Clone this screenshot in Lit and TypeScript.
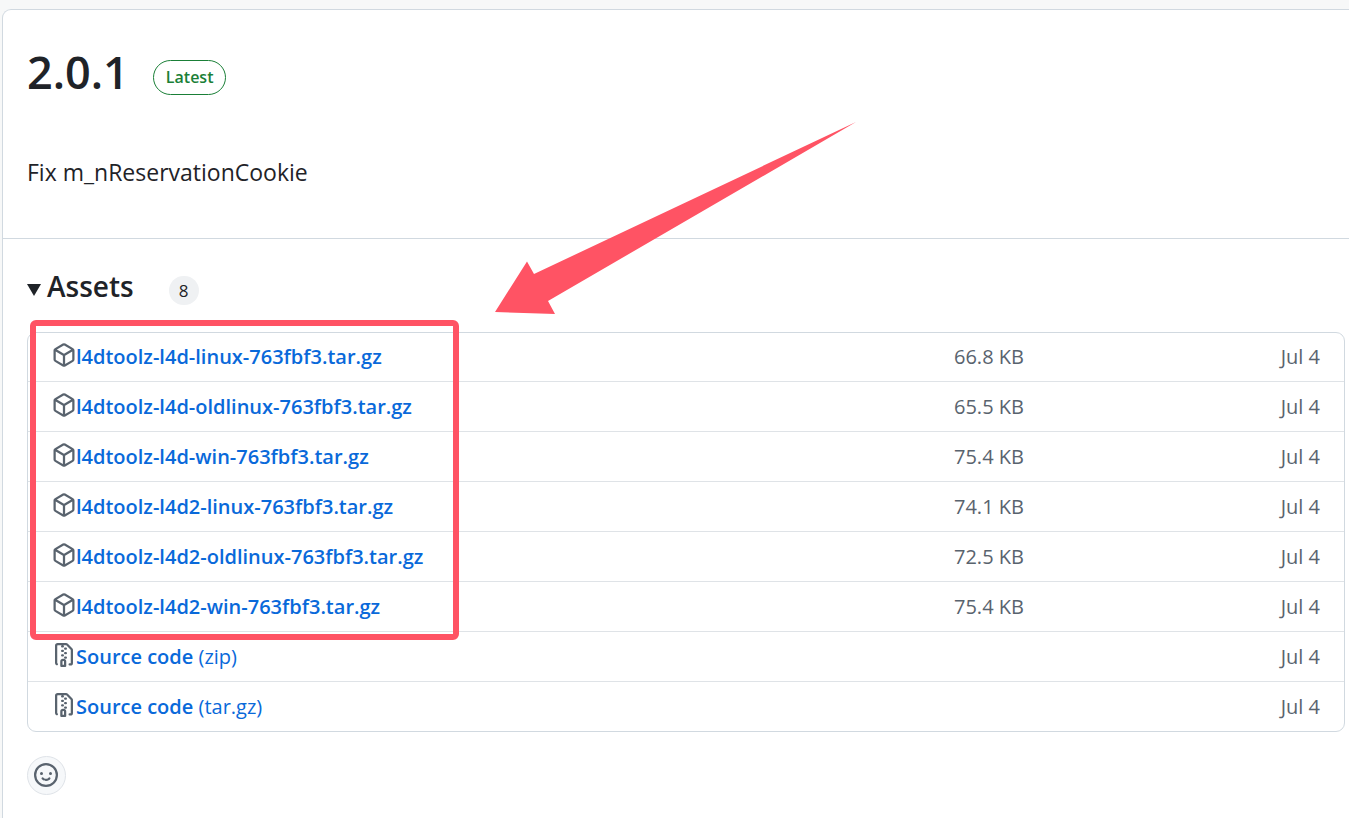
import { LitElement, html, css, svg, nothing } from "lit";
import { customElement, property } from "lit/decorators.js";

interface Asset {
  name: string;
  suffix?: string;
  size?: string;
  date: string;
  kind: "package" | "zip";
}

const ASSETS: Asset[] = [
  { name: "l4dtoolz-l4d-linux-763fbf3.tar.gz", size: "66.8 KB", date: "Jul 4", kind: "package" },
  { name: "l4dtoolz-l4d-oldlinux-763fbf3.tar.gz", size: "65.5 KB", date: "Jul 4", kind: "package" },
  { name: "l4dtoolz-l4d-win-763fbf3.tar.gz", size: "75.4 KB", date: "Jul 4", kind: "package" },
  { name: "l4dtoolz-l4d2-linux-763fbf3.tar.gz", size: "74.1 KB", date: "Jul 4", kind: "package" },
  { name: "l4dtoolz-l4d2-oldlinux-763fbf3.tar.gz", size: "72.5 KB", date: "Jul 4", kind: "package" },
  { name: "l4dtoolz-l4d2-win-763fbf3.tar.gz", size: "75.4 KB", date: "Jul 4", kind: "package" },
  { name: "Source code", suffix: "(zip)", date: "Jul 4", kind: "zip" },
  { name: "Source code", suffix: "(tar.gz)", date: "Jul 4", kind: "zip" },
];

const ICONS = {
  package: svg`<path d="m8.878.392 5.25 3.045c.54.314.872.89.872 1.514v6.098a1.75 1.75 0 0 1-.872 1.514l-5.25 3.045a1.75 1.75 0 0 1-1.756 0l-5.25-3.045A1.75 1.75 0 0 1 1 11.049V4.951c0-.624.332-1.201.872-1.514L7.122.392a1.75 1.75 0 0 1 1.756 0ZM7.875 1.69l-4.63 2.685L8 7.133l4.755-2.758-4.63-2.685a.248.248 0 0 0-.25 0ZM2.5 5.677v5.372c0 .09.047.171.125.216l4.625 2.683V8.432Zm6.25 8.271 4.625-2.683a.25.25 0 0 0 .125-.216V5.677L8.75 8.432Z"/>`,
  zip: svg`<path d="M3.5 1.75v11.5c0 .09.048.173.126.217a.75.75 0 0 1-.752 1.298A1.748 1.748 0 0 1 2 13.25V1.75C2 .784 2.784 0 3.75 0h5.586c.464 0 .909.185 1.237.513l2.914 2.914c.329.328.513.773.513 1.237v8.586A1.75 1.75 0 0 1 12.25 15h-.5a.75.75 0 0 1 0-1.5h.5a.25.25 0 0 0 .25-.25V4.664a.25.25 0 0 0-.073-.177L9.513 1.573a.25.25 0 0 0-.177-.073H7.25a.75.75 0 0 1 0 1.5h-.5a.75.75 0 0 1 0-1.5h-3a.25.25 0 0 0-.25.25Zm3.75 8.75h.5c.966 0 1.75.784 1.75 1.75v3a.75.75 0 0 1-.75.75h-2.5a.75.75 0 0 1-.75-.75v-3c0-.966.784-1.75 1.75-1.75ZM6 5.25a.75.75 0 0 1 .75-.75h.5a.75.75 0 0 1 0 1.5h-.5A.75.75 0 0 1 6 5.25Zm.75 2.25h.5a.75.75 0 0 1 0 1.5h-.5a.75.75 0 0 1 0-1.5ZM8 6.75A.75.75 0 0 1 8.75 6h.5a.75.75 0 0 1 0 1.5h-.5A.75.75 0 0 1 8 6.75ZM8.75 3h.5a.75.75 0 0 1 0 1.5h-.5a.75.75 0 0 1 0-1.5ZM8 9.75A.75.75 0 0 1 8.75 9h.5a.75.75 0 0 1 0 1.5h-.5A.75.75 0 0 1 8 9.75Zm-1 2.5v2.25h1v-2.25a.25.25 0 0 0-.25-.25h-.5a.25.25 0 0 0-.25.25Z"/>`,
  smiley: svg`<path d="M8 0a8 8 0 1 1 0 16A8 8 0 0 1 8 0ZM1.5 8a6.5 6.5 0 1 0 13 0 6.5 6.5 0 0 0-13 0Zm3.82 1.636a.75.75 0 0 1 1.038.175l.007.009c.103.118.22.222.35.31.264.178.683.37 1.285.37.602 0 1.02-.192 1.285-.371.13-.088.247-.192.35-.31l.007-.008a.75.75 0 0 1 1.222.87l-.022-.015c.02.013.021.015.021.015v.001l-.001.002-.002.003-.005.007-.014.019a2.066 2.066 0 0 1-.184.213c-.16.166-.338.316-.53.445-.63.418-1.37.638-2.127.629-.946 0-1.652-.308-2.126-.63a3.331 3.331 0 0 1-.715-.657l-.014-.02-.005-.006-.002-.003v-.002h-.001l.613-.432-.614.43a.75.75 0 0 1 .183-1.044ZM12 7a1 1 0 1 1-2 0 1 1 0 0 1 2 0ZM5 8a1 1 0 1 1 0-2 1 1 0 0 1 0 2Zm5.25 2.25.592.416a97.71 97.71 0 0 0-.592-.416Z"/>`,
};

@customElement("oct-icon")
export class OctIcon extends LitElement {
  static styles = css`
    :host {
      display: block;
      flex: none;
      width: 24px;
      height: 24px;
    }
    .glyph {
      display: block;
      width: 100%;
      height: 100%;
      fill: currentColor;
    }
  `;

  @property() name: keyof typeof ICONS = "package";

  render() {
    return html`<svg class="glyph" viewBox="0 0 16 16" aria-hidden="true">${ICONS[this.name]}</svg>`;
  }
}

@customElement("app-root")
export class AppRoot extends LitElement {
  static styles = css`
    :host {
      display: block;
      box-sizing: border-box;
      min-height: 100vh;
      padding: 9px 0 0 2px;
      overflow: hidden;
      background: #f7f8f8;
      color: #1f2328;
      font-family: "Segoe UI", "Open Sans", "Noto Sans", sans-serif;
      font-size: 20px;
      line-height: 30px;
    }
    .card {
      position: relative;
      box-sizing: border-box;
      min-height: calc(100vh - 9px);
      border: 1px solid #d1d9e0;
      border-width: 1px 0 0 1px;
      border-top-left-radius: 9px;
      background: #fff;
    }
    .release {
      padding: 32px 24px 48px;
      border-bottom: 1px solid #d1d9e0;
    }
    .heading {
      display: flex;
      align-items: center;
      gap: 24px;
      margin-bottom: 52px;
    }
    .title {
      margin: 0;
      font-size: 45px;
      line-height: 60px;
      font-weight: 600;
    }
    .latest {
      margin-top: 10px;
      padding: 0 12px;
      border: 1px solid #1a7f37;
      border-radius: 18px;
      color: #1a7f37;
      font-size: 16px;
      line-height: 33px;
      font-weight: 600;
    }
    .notes {
      margin: 0;
      font-size: 23px;
      line-height: 36px;
    }
    .assets {
      padding: 28px 4px 24px 24px;
    }
    .summary {
      display: flex;
      align-items: center;
      margin-bottom: 26px;
      list-style: none;
      cursor: pointer;
    }
    .summary::-webkit-details-marker {
      display: none;
    }
    .caret {
      width: 14px;
      height: 12px;
      margin: 6px 6px 0 0;
      fill: currentColor;
    }
    .assets-title {
      margin: 0;
      font-size: 28px;
      line-height: 39px;
      font-weight: 600;
    }
    .count {
      box-sizing: border-box;
      min-width: 30px;
      margin: 8px 0 0 35px;
      padding: 0 9px;
      border-radius: 15px;
      background: #eff1f3;
      font-size: 17px;
      line-height: 29px;
      font-weight: 500;
      text-align: center;
    }
    .panel {
      position: relative;
    }
    .list {
      margin: 0;
      padding: 0;
      border: 1px solid #d1d9e0;
      border-radius: 9px;
      list-style: none;
    }
    .row {
      display: grid;
      grid-template-columns: minmax(0, 1fr) 96px 270px;
      align-items: center;
      box-sizing: border-box;
      min-height: 50px;
      padding: 0 24px;
      border-top: 1px solid #dfe3e7;
    }
    .row:first-child {
      min-height: 48px;
      border-top: 0;
    }
    .file {
      display: flex;
      align-items: center;
      min-width: 0;
    }
    .file-icon {
      margin-top: -4px;
      color: #59636e;
    }
    .link {
      color: #0969da;
      text-decoration: none;
      white-space: nowrap;
    }
    .name {
      font-weight: 600;
    }
    .meta {
      color: #59636e;
      white-space: nowrap;
    }
    .date {
      text-align: right;
    }
    .react {
      display: grid;
      place-items: center;
      box-sizing: border-box;
      width: 39px;
      height: 39px;
      margin: 24px 0 0;
      padding: 0 1px 1px 0;
      border: 1px solid #dfe3e8;
      border-radius: 50%;
      background: #f6f8fa;
      color: #59636e;
    }
    .frame {
      position: absolute;
      top: -12px;
      left: 3px;
      box-sizing: border-box;
      width: 429px;
      height: 320px;
      border: 6px solid #ff5364;
      border-radius: 6px;
      pointer-events: none;
    }
    .arrow {
      position: absolute;
      top: 112px;
      left: 492px;
      width: 361px;
      height: 193px;
      fill: #ff5364;
      pointer-events: none;
    }
  `;

  private renderRow(asset: Asset) {
    return html`
      <li class="row">
        <div class="file">
          <oct-icon class="file-icon" name=${asset.kind}></oct-icon>
          <a class="link" href="#"
            ><span class="name">${asset.name}</span>${asset.suffix ? html` ${asset.suffix}` : nothing}</a
          >
        </div>
        <span class="meta">${asset.size ?? nothing}</span>
        <span class="meta date">${asset.date}</span>
      </li>
    `;
  }

  render() {
    return html`
      <main class="card">
        <section class="release">
          <div class="heading">
            <h1 class="title">2.0.1</h1>
            <span class="latest">Latest</span>
          </div>
          <p class="notes">Fix m_nReservationCookie</p>
        </section>
        <section class="assets">
          <details open>
            <summary class="summary">
              <svg class="caret" viewBox="0 0 14 12" aria-hidden="true"><path d="M0 0h14L7 12Z" /></svg>
              <h2 class="assets-title">Assets</h2>
              <span class="count">8</span>
            </summary>
            <div class="panel">
              <ul class="list">
                ${ASSETS.map((asset) => this.renderRow(asset))}
              </ul>
              <div class="frame"></div>
            </div>
          </details>
          <button class="react" type="button" aria-label="Add a reaction">
            <oct-icon name="smiley"></oct-icon>
          </button>
        </section>
        <svg class="arrow" viewBox="0 0 361 193" aria-hidden="true">
          <path d="M0 190 32 139.500 39 152 361 0 53 179 60 192Z" />
        </svg>
      </main>
    `;
  }
}
